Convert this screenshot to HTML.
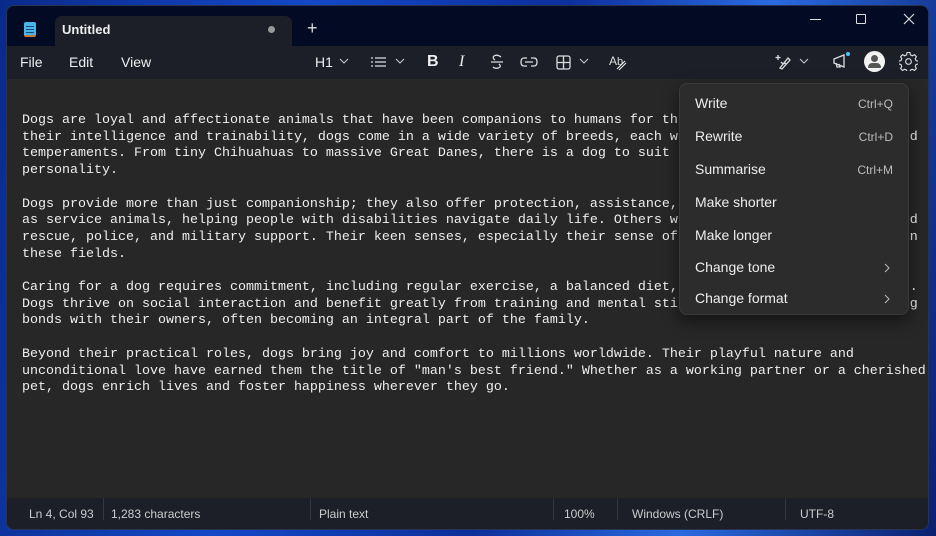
<!DOCTYPE html>
<html><head><meta charset="utf-8"><style>
*{margin:0;padding:0;box-sizing:border-box}
body{width:936px;height:536px;overflow:hidden;background:linear-gradient(100deg,#0a2a8a 0%,#1448c8 30%,#0c2f9c 55%,#2a6ae0 75%,#0a2070 100%);font-family:"Liberation Sans",sans-serif;position:relative}
.win{position:absolute;left:6px;top:5px;width:923px;height:525px;border-radius:8px;overflow:hidden;background:#020a24;border:1px solid #2a3350}
.abs{position:absolute}
.tb{left:0;top:40px;width:100%;height:33px;background:#1c1f28}
.ed{left:0;top:73px;width:100%;height:419px;background:#272727}
.sb{left:0;top:492px;width:100%;height:33px;background:#1c1f28}
.txt{position:absolute;left:22px;top:113px;font-family:"Liberation Mono",monospace;font-size:13.33px;line-height:16.7px;color:#eee;white-space:pre}
.menu{position:absolute;left:679px;top:83px;width:230px;height:232px;background:#2c2c2c;border-radius:8px;border:1px solid #3a3a3a;box-shadow:0 6px 16px rgba(0,0,0,.5)}
.mi{position:absolute;left:15px;font-size:14px;color:#eee}
.sc{position:absolute;right:15px;font-size:12px;color:#bbb}
.st{position:absolute;top:507px;font-size:12px;color:#ccc}
.sep{position:absolute;top:498px;width:1px;height:22px;background:#333846}
.mt{position:absolute;top:54px;font-size:14px;color:#eee}
svg{position:absolute}
</style></head><body>
<div class="win">
 <div class="abs tb"></div>
 <div class="abs" style="left:48px;top:10px;width:237px;height:32px;background:#1c1f28;border-radius:7px 7px 0 0"></div>
 <div class="abs ed"></div>
 <div class="abs sb"></div>
</div>
<div class="abs" style="left:24px;top:22px;width:12px;height:15px;background:#4ab3e8;border-radius:2px;border-bottom:2px solid #c57a3a"></div>
<div class="abs" style="left:26px;top:26px;width:8px;height:1px;background:#1a4b7a;box-shadow:0 3px #1a4b7a,0 6px #1a4b7a"></div>
<div class="abs" style="left:62px;top:22px;font-size:13px;font-weight:bold;color:#eee">Untitled</div>
<div class="abs" style="left:268px;top:26px;width:7px;height:7px;border-radius:50%;background:#999"></div>
<div class="abs" style="left:307px;top:18px;font-size:18px;color:#ddd">+</div>
<div class="abs" style="left:810px;top:19px;width:11px;height:1px;background:#ddd"></div>
<div class="abs" style="left:856px;top:14px;width:10px;height:10px;border:1px solid #ddd;border-radius:1px"></div>
<svg style="left:903px;top:13px" width="12" height="12"><path d="M1 1L11 11M11 1L1 11" stroke="#ddd" stroke-width="1.2"/></svg>
<div class="mt" style="left:20px">File</div>
<div class="mt" style="left:69px">Edit</div>
<div class="mt" style="left:121px">View</div>
<div class="mt" style="left:315px">H1</div>
<svg style="left:339px;top:58px" width="10" height="6"><path d="M1 1L5 5L9 1" stroke="#ccc" fill="none"/></svg>
<svg style="left:371px;top:56px" width="16" height="12"><path d="M0 2h2M0 6h2M0 10h2M4 2h11M4 6h11M4 10h11" stroke="#ddd" stroke-width="1.3"/></svg>
<svg style="left:395px;top:58px" width="10" height="6"><path d="M1 1L5 5L9 1" stroke="#ccc" fill="none"/></svg>
<div class="mt" style="left:427px;font-weight:bold;font-size:16px;top:53px">B</div>
<div class="mt" style="left:459px;font-style:italic;font-size:16px;top:53px;font-family:'Liberation Serif',serif">I</div>
<svg style="left:490px;top:54px" width="14" height="16"><path d="M11 3Q7 0 4 2Q2 4 5 6M1 8h12M9 10Q12 13 8 14Q5 15 3 13" stroke="#ddd" fill="none" stroke-width="1.3"/></svg>
<svg style="left:520px;top:57px" width="18" height="10"><path d="M7 1H4Q1 1 1 5Q1 9 4 9H7M11 1H14Q17 1 17 5Q17 9 14 9H11M5 5H13" stroke="#ddd" fill="none" stroke-width="1.3"/></svg>
<svg style="left:556px;top:55px" width="15" height="15"><rect x="1" y="1" width="13" height="13" rx="2" stroke="#ddd" fill="none" stroke-width="1.3"/><path d="M7.5 1v13M1 7.5h13" stroke="#ddd" stroke-width="1.3"/></svg>
<svg style="left:579px;top:58px" width="10" height="6"><path d="M1 1L5 5L9 1" stroke="#ccc" fill="none"/></svg>
<div class="abs" style="left:609px;top:54px;font-size:12px;color:#ddd">A<span style="font-size:11px">b</span></div>
<svg style="left:615px;top:59px" width="12" height="12"><path d="M2 10L10 2M4 11L11 4" stroke="#ddd" fill="none" stroke-width="1.2"/></svg>
<svg style="left:775px;top:54px" width="18" height="16"><path d="M3 1v5M0.5 3.5h5M5 14L13 4L15 6L7 15ZM6 8Q8 11 11 9" stroke="#ddd" fill="none" stroke-width="1.3"/></svg>
<svg style="left:799px;top:58px" width="10" height="6"><path d="M1 1L5 5L9 1" stroke="#ccc" fill="none"/></svg>
<svg style="left:832px;top:52px" width="20" height="18"><path d="M2 7L12 3V15L2 11Z M4 11L5 15H8L7 12" stroke="#ddd" fill="none" stroke-width="1.3"/><circle cx="16" cy="2" r="2" fill="#4cc2ff"/></svg>
<div class="abs" style="left:864px;top:51px;width:21px;height:21px;border-radius:50%;background:#f2f2f2"></div>
<div class="abs" style="left:871px;top:55px;width:7px;height:7px;border-radius:50%;background:#555"></div>
<div class="abs" style="left:868px;top:63px;width:13px;height:5px;border-radius:5px 5px 1px 1px;background:#555"></div>
<svg style="left:899px;top:52px" width="19" height="19" viewBox="0 0 20 20"><path d="M8.5 1.5h3l.5 2.5 2 1 2.3-1.2 2 2-1.2 2.3.9 2 2.5.5v3l-2.5.5-.9 2 1.2 2.3-2 2-2.3-1.2-2 .9-.5 2.5h-3l-.5-2.5-2-.9-2.3 1.2-2-2 1.2-2.3-.9-2-2.5-.5v-3l2.5-.5.9-2-1.2-2.3 2-2 2.3 1.2 2-1z" stroke="#ddd" fill="none" stroke-width="1.2" transform="translate(0,-1)"/><circle cx="10" cy="10" r="3" stroke="#ddd" fill="none" stroke-width="1.2"/></svg>
<div class="txt">Dogs are loyal and affectionate animals that have been companions to humans for th
their intelligence and trainability, dogs come in a wide variety of breeds, each w                             d
temperaments. From tiny Chihuahuas to massive Great Danes, there is a dog to suit 
personality.

Dogs provide more than just companionship; they also offer protection, assistance,
as service animals, helping people with disabilities navigate daily life. Others w                            nd
rescue, police, and military support. Their keen senses, especially their sense of                            in
these fields.

Caring for a dog requires commitment, including regular exercise, a balanced diet,                            e.
Dogs thrive on social interaction and benefit greatly from training and mental sti                             g
bonds with their owners, often becoming an integral part of the family.

Beyond their practical roles, dogs bring joy and comfort to millions worldwide. Their playful nature and
unconditional love have earned them the title of "man's best friend." Whether as a working partner or a cherished
pet, dogs enrich lives and foster happiness wherever they go.</div>
<div class="menu">
 <div class="mi" style="top:11px">Write</div><div class="sc" style="top:13px">Ctrl+Q</div>
 <div class="mi" style="top:44px">Rewrite</div><div class="sc" style="top:46px">Ctrl+D</div>
 <div class="mi" style="top:77px">Summarise</div><div class="sc" style="top:79px">Ctrl+M</div>
 <div class="mi" style="top:110px">Make shorter</div>
 <div class="mi" style="top:143px">Make longer</div>
 <div class="mi" style="top:175px">Change tone</div>
 <svg style="left:204px;top:179px" width="6" height="10"><path d="M1 1L5 5L1 9" stroke="#bbb" fill="none"/></svg>
 <div class="mi" style="top:206px">Change format</div>
 <svg style="left:204px;top:210px" width="6" height="10"><path d="M1 1L5 5L1 9" stroke="#bbb" fill="none"/></svg>
</div>
<div class="st" style="left:29px">Ln 4, Col 93</div>
<div class="sep" style="left:103px"></div>
<div class="st" style="left:111px">1,283 characters</div>
<div class="sep" style="left:310px"></div>
<div class="st" style="left:319px">Plain text</div>
<div class="sep" style="left:553px"></div>
<div class="st" style="left:564px">100%</div>
<div class="sep" style="left:617px"></div>
<div class="st" style="left:632px">Windows (CRLF)</div>
<div class="sep" style="left:785px"></div>
<div class="st" style="left:800px">UTF-8</div>
</body></html>
